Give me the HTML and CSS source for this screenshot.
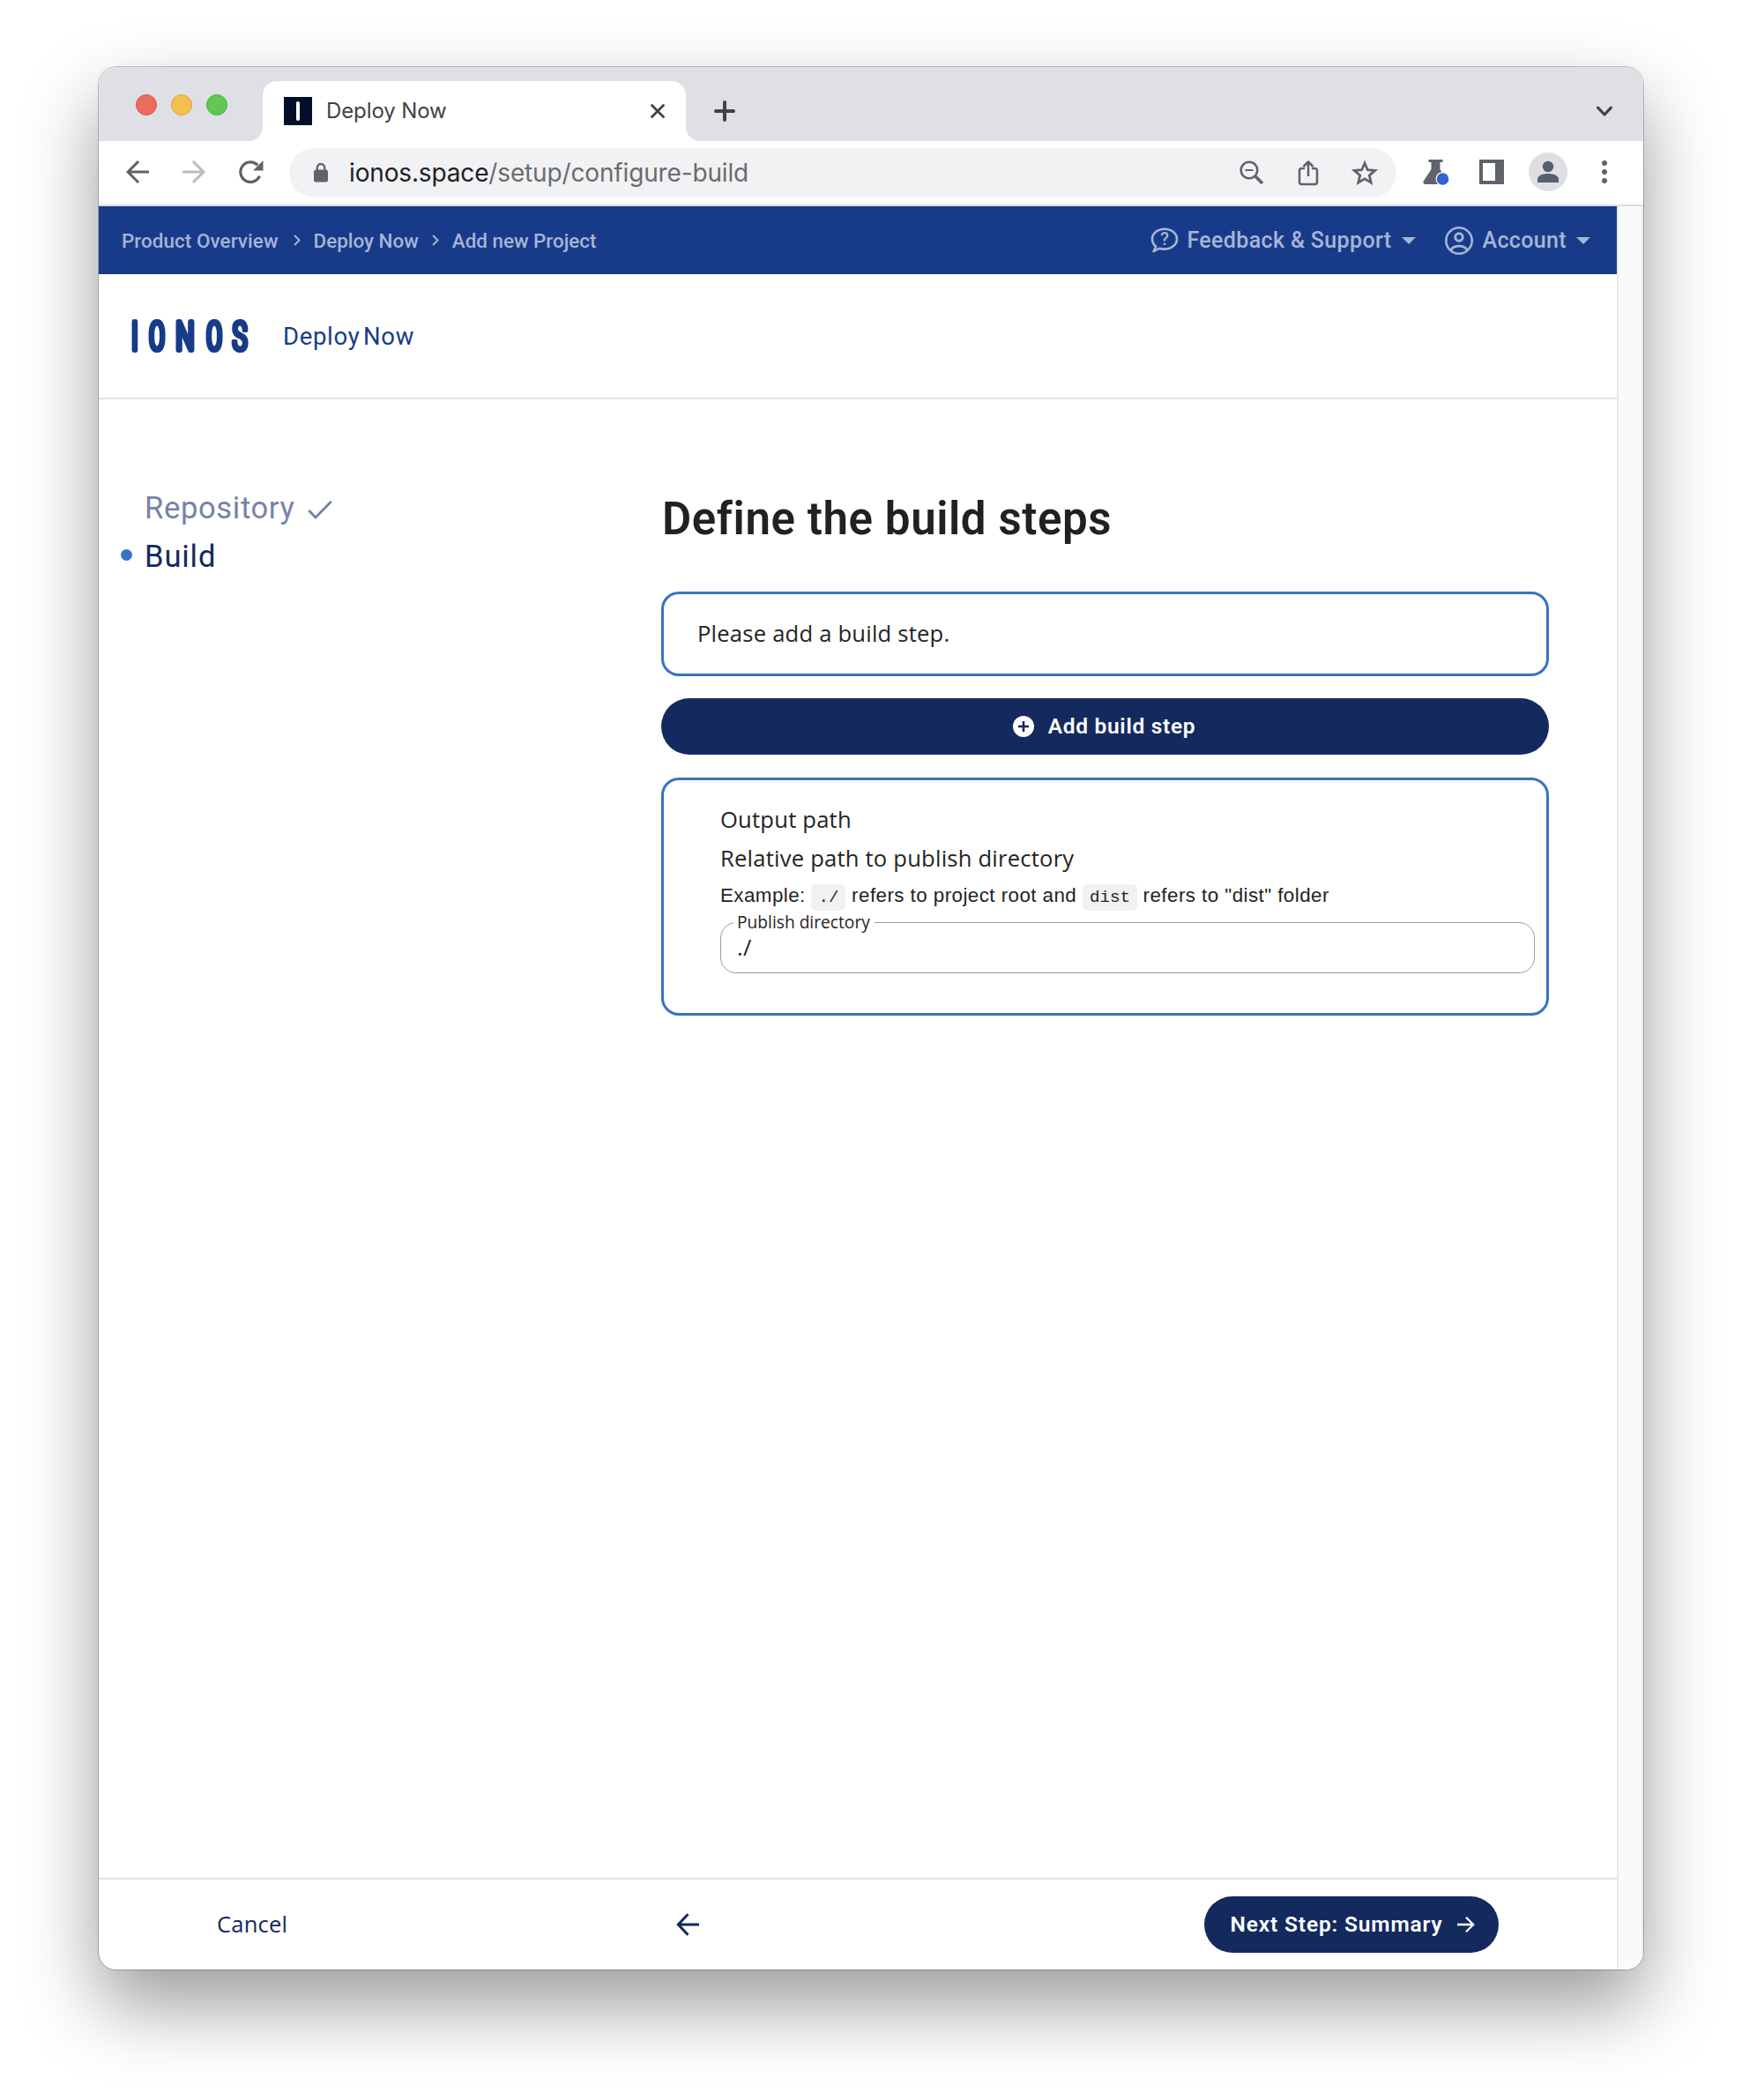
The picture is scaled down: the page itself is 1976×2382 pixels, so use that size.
FILE: index.html
```html
<!DOCTYPE html>
<html lang="en">
<head>
<meta charset="utf-8">
<title>Deploy Now</title>
<link rel="stylesheet" href="styles.css">
</head>
<body>
<div class="window">
  <div class="tabstrip">
    <div class="lights"><span class="light red"></span><span class="light yellow"></span><span class="light green"></span></div>
    <div class="tab-slot">
      <div class="tab">
        <svg class="favicon" width="32" height="32" viewBox="0 0 32 32"><rect width="32" height="32" fill="#020f2b"/><rect x="14" y="5" width="4" height="22" rx="2" fill="#fff"/></svg>
        <span class="tab-title">Deploy Now</span>
        <svg width="16" height="16" viewBox="0 0 16 16" fill="none" stroke="#3f4246" stroke-width="2.8" stroke-linecap="round"><path d="M1.5 1.5l13 13M14.5 1.5l-13 13"/></svg>
      </div>
    </div>
    <div class="strip-rest">
      <svg width="24" height="24" viewBox="0 0 24 24" fill="none" stroke="#3f4246" stroke-width="4" stroke-linecap="round"><path d="M12 2v20M2 12h20"/></svg>
      <svg width="20" height="14" viewBox="0 0 20 14" fill="none" stroke="#3f4246" stroke-width="3.2" stroke-linecap="round" stroke-linejoin="round"><path d="M2.6 3.2L10 11l7.4-7.8"/></svg>
    </div>
  </div>

  <div class="toolbar">
    <svg class="nav-back" width="26" height="26" viewBox="0 0 26 26" fill="none" stroke="#606368" stroke-width="3" stroke-linecap="square"><path d="M24.500 13H3M13 2.100L2.100 13L13 23.900"/></svg>
    <svg class="nav-fwd" width="26" height="26" viewBox="0 0 26 26" fill="none" stroke="#b9bbbe" stroke-width="3" stroke-linecap="square"><path d="M1.500 13H23M13 2.100L23.900 13L13 23.900"/></svg>
    <svg class="nav-reload" width="28" height="26" viewBox="0 0 28 26"><path d="M23.500 17.600A11.300 11.300 0 1 1 21.300 5.300" fill="none" stroke="#606368" stroke-width="3.200"/><path d="M27.500 0v11.500H16z" fill="#606368"/></svg>
    <div class="omnibox">
      <svg width="16" height="22" viewBox="0 0 16 22"><rect y="7.500" width="16" height="14" rx="2.500" fill="#606368"/><path d="M3.800 9V5.200a4.200 4.200 0 0 1 8.400 0V9" fill="none" stroke="#606368" stroke-width="2.400"/></svg>
      <span class="url"><b>ionos.space</b>/setup/configure-build</span>
      <svg width="28" height="28" viewBox="0 0 28 28" fill="none" stroke="#606368"><circle cx="11" cy="11" r="9.300" stroke-width="2.600"/><path d="M18 18l8 8" stroke-width="3.600"/><path d="M6.500 11h9" stroke-width="2"/></svg>
      <svg class="share" width="24" height="30" viewBox="0 0 24 30" fill="none" stroke="#606368" stroke-width="2.500" stroke-linejoin="round"><path d="M8 10H4.500a2.500 2.500 0 0 0-2.500 2.500V25.500a2.500 2.500 0 0 0 2.500 2.500h15a2.500 2.500 0 0 0 2.500-2.500V12.500a2.500 2.500 0 0 0-2.500-2.500H16"/><path d="M12 19V3M6.500 8L12 2.500 17.500 8"/></svg>
      <svg class="star" width="30" height="30" viewBox="0 0 30 30" fill="none" stroke="#606368" stroke-width="2.800"><path d="M15 4l3.300 7.700 8.400.7-6.400 5.500 1.900 8.200L15 21.800l-7.200 4.300 1.900-8.200-6.400-5.500 8.400-.7z"/></svg>
    </div>
    <svg class="flask" width="30" height="30" viewBox="0 0 30 30"><path d="M6.500 1h16v3h-3v8l8 13q2 4-2 4H4q-5 0-3-4l8.500-13V4h-3z" fill="#606368"/><circle cx="22.500" cy="23" r="8" fill="#fff"/><circle cx="22.500" cy="23" r="6.800" fill="#3064d0"/></svg>
    <svg class="panel" width="28" height="28" viewBox="0 0 28 28"><rect width="28" height="28" fill="#606368"/><rect x="4" y="4" width="14" height="20" fill="#fff"/></svg>
    <svg class="avatar" width="44" height="44" viewBox="0 0 44 44"><circle cx="22" cy="22" r="22" fill="#dedfe4"/><circle cx="22" cy="16" r="6.200" fill="#545f6f"/><path d="M10 34v-3.500C10 26 16 24 22 24s12 2 12 6.500V34z" fill="#545f6f"/></svg>
    <svg class="dots" width="6" height="26" viewBox="0 0 6 26" fill="#606368"><circle cx="3" cy="3" r="3"/><circle cx="3" cy="13" r="3"/><circle cx="3" cy="23" r="3"/></svg>
  </div>

  <div class="viewport">
    <div class="page">
      <nav class="topbar">
        <span class="crumb c1">Product Overview</span>
        <svg width="8" height="13" viewBox="0 0 8 13" fill="none" stroke="#a6b4d6" stroke-width="2"><path d="M1 1l5.500 5.500L1 12"/></svg>
        <span class="crumb">Deploy Now</span>
        <svg width="8" height="13" viewBox="0 0 8 13" fill="none" stroke="#a6b4d6" stroke-width="2"><path d="M1 1l5.500 5.500L1 12"/></svg>
        <span class="crumb">Add new Project</span>
        <div class="menus">
          <svg class="help" width="34" height="32" viewBox="0 0 34 32"><path d="M17 2.800c7.700 0 14 5 14 11.400s-6.300 11.400-14 11.400c-2 0-3.900-.3-5.600-.9L4.500 28.200l2.700-5.700C4.600 20.400 3 17.400 3 14.200 3 7.800 9.300 2.800 17 2.800z" fill="none" stroke="#a6b4d6" stroke-width="2.600" stroke-linejoin="round"/><text x="17" y="21" text-anchor="middle" class="help-mark">?</text></svg>
          <span class="menu-label m1">Feedback &amp; Support</span>
          <svg width="16" height="8" viewBox="0 0 16 8"><path d="M0 0h16L8 8z" fill="#a6b4d6"/></svg>
          <svg class="account" width="32" height="32" viewBox="0 0 32 32" fill="none" stroke="#a6b4d6"><circle cx="16" cy="16" r="14.700" stroke-width="2.600"/><circle cx="16" cy="12" r="4.200" stroke-width="3"/><path d="M7 26.500c1.500-3 5-4.300 9-4.300s7.500 1.300 9 4.300" stroke-width="2.800"/></svg>
          <span class="menu-label m2">Account</span>
          <svg width="16" height="8" viewBox="0 0 16 8"><path d="M0 0h16L8 8z" fill="#a6b4d6"/></svg>
        </div>
      </nav>

      <header class="brand">
        <svg class="logo" width="150" height="64" viewBox="-6 0 150 64">
          <g class="wordmark">
            <text class="mark" transform="translate(4.500 47.500) scale(.55 1)">I</text>
            <text class="mark" transform="translate(29.500 47.500) scale(.55 1)">O</text>
            <text class="mark" transform="translate(61.500 47.500) scale(.64 1)">N</text>
            <text class="mark" transform="translate(94.500 47.500) scale(.55 1)">O</text>
            <text class="mark" transform="translate(123.500 47.500) scale(.58 1)">S</text>
          </g>
        </svg>
        <span class="product">Deploy Now</span>
      </header>

      <main class="main">
        <ul class="steps">
          <li class="step done"><span class="bullet"></span>Repository<svg width="28" height="22" viewBox="0 0 28 22" fill="none" stroke="#7583a5" stroke-width="2.800"><path d="M1.300 12l7.700 8L26.700 1.800"/></svg></li>
          <li class="step current"><span class="bullet"></span>Build</li>
        </ul>
        <section class="content">
          <h1>Define the build steps</h1>
          <div class="card notice">Please add a build step.</div>
          <button class="pill add"><svg width="24" height="24" viewBox="0 0 24 24"><circle cx="12" cy="12" r="12" fill="#fff"/><path d="M12 6v12M6 12h12" stroke="#14295e" stroke-width="2.600"/></svg><span>Add build step</span></button>
          <div class="card output">
            <div class="line">Output path</div>
            <div class="line">Relative path to publish directory</div>
            <div class="example">Example: <code>./</code> refers to project root and <code>dist</code> refers to "dist" folder</div>
            <fieldset class="field"><legend>Publish directory</legend><div class="value">./</div></fieldset>
          </div>
        </section>
      </main>

      <footer class="footer">
        <span class="cancel">Cancel</span>
        <svg class="back" width="26" height="26" viewBox="0 0 26 26" fill="none" stroke="#14295e" stroke-width="3"><path d="M26 13H2.500M13.500 1.200L2.300 13l11.200 11.800"/></svg>
        <button class="pill next"><span>Next Step: Summary</span><svg width="20" height="18" viewBox="0 0 20 18" fill="none" stroke="#fff" stroke-width="2.300"><path d="M0 9h18M10 .8L18.200 9 10 17.200"/></svg></button>
      </footer>
    </div>
    <div class="gutter"></div>
  </div>
</div>
</body>
</html>
```
FILE: styles.css
```css
* { box-sizing: border-box; }
html { background: #fff; }
body { margin: 0; padding: 76px 112px 148px; }
svg { display: block; flex: none; }

.window {
  width: 1752px;
  height: 2158px;
  border-radius: 20px;
  overflow: hidden;
  display: flex;
  flex-direction: column;
  background: #fff;
  box-shadow: 0 0 0 1px rgba(0, 0, 0, .22), 0 40px 86px rgba(0, 0, 0, .4);
}

/* tab strip */
.tabstrip { display: flex; height: 84px; flex: none; background: #fff; }
.lights {
  width: 186px;
  display: flex;
  gap: 16px;
  padding: 31px 0 0 42px;
  background: #dfe0e5;
  border-bottom-right-radius: 16px;
}
.light { width: 24px; height: 24px; border-radius: 50%; border: 1px solid; }
.red { background: #ec6a5f; border-color: #d5554b; }
.yellow { background: #f5bf50; border-color: #d9a33d; }
.green { background: #62c655; border-color: #4fae42; }
.tab-slot { width: 480px; padding-top: 16px; background: linear-gradient(#dfe0e5 40px, #fff 40px); }
.tab {
  height: 68px;
  display: flex;
  align-items: center;
  padding: 0 24px;
  background: #fff;
  border-radius: 16px 16px 0 0;
}
.tab-title {
  flex: 1;
  margin-left: 16px;
  font: 400 24px/30px Inter, sans-serif;
  letter-spacing: -.11px;
  color: #3f4246;
}
.strip-rest {
  flex: 1;
  display: flex;
  align-items: center;
  justify-content: space-between;
  padding: 16px 34px 0 32px;
  background: #dfe0e5;
  border-bottom-left-radius: 16px;
}

/* toolbar */
.toolbar {
  display: flex;
  align-items: center;
  height: 74px;
  padding: 0 41px 2px 31px;
  flex: none;
  border-bottom: 2px solid #dadcdc;
}
.nav-fwd { margin-left: 38px; }
.nav-reload { margin-left: 38px; }
.omnibox {
  width: 1256px;
  height: 56px;
  margin: 2px 0 0 29px;
  padding: 0 21px 0 28px;
  display: flex;
  align-items: center;
  border-radius: 28px;
  background: #f1f2f4;
}
.url {
  flex: 1;
  margin-left: 24px;
  font: 400 28px/36px Inter, sans-serif;
  letter-spacing: -.15px;
  color: #6a6b6d;
}
.url b { font-weight: 400; color: #202124; }
.share { margin-left: 38px; }
.star { margin-left: 37px; }
.flask { margin-left: 30px; }
.panel { margin-left: 34px; }
.avatar { margin-left: 28px; }
.dots { margin-left: 39px; }

.viewport { flex: 1; display: flex; min-height: 0; }
.page { width: 1722px; display: flex; flex-direction: column; }
.gutter {
  flex: 1;
  background: #fafafa;
  border-left: 2px solid #e8e8e8;
  border-right: 2px solid #ededed;
}

/* breadcrumbs */
.topbar {
  display: flex;
  align-items: center;
  height: 77px;
  padding: 0 30px 0 26px;
  background: #173b88;
  color: #a6b4d6;
}
.crumb { margin: 0 15px; font: 500 22.400px/30px Roboto, sans-serif; white-space: nowrap; }
.c1 { margin-left: 0; margin-right: 17px; letter-spacing: .08px; }
.menus { display: flex; align-items: center; margin-left: auto; }
.help-mark { font: 500 20px Roboto, sans-serif; fill: #a6b4d6; }
.menu-label { font: 500 25px/32px Roboto, sans-serif; letter-spacing: .360px; white-space: nowrap; }
.m1 { margin: 0 12px 0 8px; }
.m2 { margin: 0 11px 0 10px; }
.account { margin-left: 33px; }

/* product header */
.brand {
  display: flex;
  align-items: center;
  height: 142px;
  padding-left: 31px;
  border-bottom: 2px solid #e3e3e3;
}
/* evens out the horizontal stroke weight of the condensed letters */
.wordmark { filter: drop-shadow(1.300px 0 0 #173b88) drop-shadow(-1.300px 0 0 #173b88); }
.mark {
  font: 100 44px Roboto, sans-serif;
  text-anchor: middle;
  fill: #173b88;
  stroke: #173b88;
  stroke-width: 5.500px;
  stroke-linejoin: round;
}
.product {
  margin-left: 28px;
  padding-top: 1px;
  font: 400 27.500px/36px Roboto, sans-serif;
  word-spacing: -.140em;
  color: #173b88;
  letter-spacing: .680px;
}

/* wizard */
.main { flex: 1; display: flex; }
.steps { width: 638px; margin: 96px 0 0; padding: 0 0 0 25px; list-style: none; }
.step {
  display: flex;
  align-items: center;
  height: 55px;
  font: 400 34.500px/55px Roboto, sans-serif;
  letter-spacing: .680px;
}
.step svg { margin-left: 14px; margin-top: 2px; }
.done { color: #7583a5; }
.current { color: #14295e; letter-spacing: .9px; }
.bullet { width: 13px; height: 13px; margin-right: 14px; margin-top: -4px; border-radius: 50%; }
.current .bullet { background: #3873c3; }

.content { width: 1007px; padding-top: 106px; }
h1 {
  margin: 0 0 52px;
  padding-left: 1px;
  font: 600 51px/60px Roboto, sans-serif;
  letter-spacing: .590px;
  color: #212121;
}
.card {
  border: 3px solid #3873c3;
  border-radius: 20px;
  font: 400 25.600px/44px "Open Sans", sans-serif;
  letter-spacing: .210px;
  color: #242424;
}
.notice { height: 96px; padding: 23px 38px; }
.pill {
  display: flex;
  align-items: center;
  justify-content: center;
  height: 64px;
  border: 0;
  border-radius: 32px;
  background: #14295e;
  color: #fff;
  font: 600 24.500px/32px Roboto, sans-serif;
  letter-spacing: .700px;
}
.add { width: 100%; margin: 25px 0 26px; padding: 0 2px 0 0; gap: 16px; }
.output { height: 270px; padding: 23px 13px 0 64px; }
.example {
  margin-bottom: -1px;
  font: 400 22.400px/40px "Liberation Sans", Arial, sans-serif;
  letter-spacing: .430px;
}
code {
  padding: 4px 8px;
  border-radius: 6px;
  background: #f1f1f1;
  font: 400 19.200px "Liberation Mono", monospace;
  letter-spacing: 0;
}
.field {
  height: 69px;
  margin: 0;
  padding: 0 14px;
  border: 1px solid #9a9a9a;
  border-radius: 18px;
}
legend { padding: 0 5px 0 4px; font-size: 19.200px; line-height: 22px; letter-spacing: 0; }
.value { margin-left: 4px; line-height: 36px; }

/* footer */
.footer {
  display: flex;
  align-items: center;
  height: 104px;
  border-top: 2px solid #e0e1e1;
  padding-left: 134px;
  color: #14295e;
}
.cancel { width: 521px; font: 400 25.600px/36px "Open Sans", sans-serif; letter-spacing: .160px; }
.next { width: 334px; margin-left: 573px; gap: 17px; padding: 0 0 0 3px; letter-spacing: .840px; }
```
